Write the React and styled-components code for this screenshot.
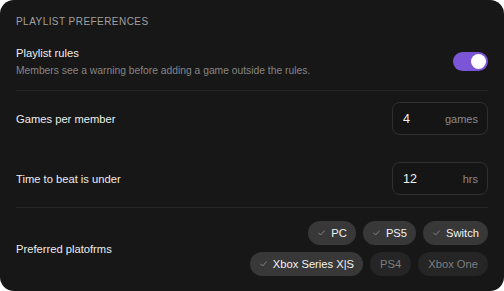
import React, { useState } from 'react';
import styled, { createGlobalStyle } from 'styled-components';

const GlobalStyle = createGlobalStyle`
  html, body {
    margin: 0;
    padding: 0;
    background: #ffffff;
  }
  body {
    font-family: "Liberation Sans", Arial, sans-serif;
  }
`;

const Card = styled.div`
  width: 504px;
  height: 291px;
  box-sizing: border-box;
  background: #171717;
  border-radius: 14px;
  padding: 0 16px;
  display: flex;
  flex-direction: column;
  overflow: hidden;
`;

const Section = styled.div`
  display: flex;
  flex-direction: column;
  gap: ${({ gap }) => gap || 0}px;
  padding: ${({ pad }) => pad};
  border-bottom: ${({ last }) => (last ? 'none' : '1px solid #262626')};
  flex: ${({ last }) => (last ? 1 : 'none')};
`;

const Heading = styled.h2`
  margin: 0;
  font-size: 10px;
  line-height: 12px;
  font-weight: 400;
  letter-spacing: 0.45px;
  text-transform: uppercase;
  color: #a0a0a0;
`;

const Row = styled.div`
  display: flex;
  align-items: center;
  justify-content: space-between;
  gap: 16px;
`;

const Texts = styled.div`
  display: flex;
  flex-direction: column;
  gap: 3px;
`;

const Label = styled.div`
  font-size: 11.2px;
  line-height: 16px;
  color: #ededed;
`;

const Hint = styled.div`
  font-size: 10.3px;
  line-height: 14px;
  color: #858585;
`;

const Switch = styled.button`
  width: 35px;
  height: 19px;
  border: none;
  border-radius: 10px;
  padding: 2px;
  background: ${({ on }) => (on ? '#7a56d6' : '#3a3a3a')};
  display: flex;
  justify-content: ${({ on }) => (on ? 'flex-end' : 'flex-start')};
  align-items: center;
  cursor: pointer;
  box-sizing: border-box;
`;

const Knob = styled.span`
  width: 15px;
  height: 15px;
  border-radius: 50%;
  background: #ffffff;
`;

const Field = styled.label`
  width: 96px;
  height: 33px;
  box-sizing: border-box;
  border: 1px solid #303030;
  border-radius: 8px;
  background: #151515;
  display: flex;
  align-items: center;
  justify-content: space-between;
  padding: 0 9px 0 10px;
`;

const Value = styled.span`
  font-size: 12.5px;
  color: #f2f2f2;
`;

const Unit = styled.span`
  font-size: 11px;
  color: #8a8a8a;
`;

const Chips = styled.div`
  display: flex;
  flex-wrap: wrap;
  justify-content: flex-end;
  gap: 7px;
  width: 250px;
`;

const Chip = styled.button`
  height: 24px;
  border: none;
  border-radius: 12px;
  padding: ${({ selected }) => (selected ? '0 9px 0 10px' : '0 10px')};
  display: flex;
  align-items: center;
  gap: 6px;
  flex-shrink: 0;
  font-family: inherit;
  font-size: 11.2px;
  background: ${({ selected }) => (selected ? '#383838' : '#252525')};
  color: ${({ selected }) => (selected ? '#f2f2f2' : '#7e7e7e')};
  cursor: pointer;
`;

const Check = () => (
  <svg width="7" height="6" viewBox="0 0 7 6" fill="none">
    <path d="M0.6 3 L2.6 5 L6.4 0.8" stroke="#8c8c8c" strokeWidth="0.9" strokeLinecap="round" strokeLinejoin="round" />
  </svg>
);

const platforms = [
  { name: 'PC', selected: true },
  { name: 'PS5', selected: true },
  { name: 'Switch', selected: true },
  { name: 'Xbox Series X|S', selected: true },
  { name: 'PS4', selected: false },
  { name: 'Xbox One', selected: false },
];

export default function App() {
  const [rules, setRules] = useState(true);

  return (
    <>
      <GlobalStyle />
      <Card>
        <Section pad="16px 0 12px" gap={17}>
          <Heading>Playlist preferences</Heading>
          <Row>
            <Texts>
              <Label>Playlist rules</Label>
              <Hint>Members see a warning before adding a game outside the rules.</Hint>
            </Texts>
            <Switch on={rules ? 1 : 0} onClick={() => setRules(!rules)}>
              <Knob />
            </Switch>
          </Row>
        </Section>
        <Section pad="11px 0 12px" gap={27}>
          <Row>
            <Label>Games per member</Label>
            <Field>
              <Value>4</Value>
              <Unit>games</Unit>
            </Field>
          </Row>
          <Row>
            <Label>Time to beat is under</Label>
            <Field>
              <Value>12</Value>
              <Unit>hrs</Unit>
            </Field>
          </Row>
        </Section>
        <Section pad="13px 0 14px" last>
          <Row>
            <Label>Preferred platofrms</Label>
            <Chips>
              {platforms.map((p) => (
                <Chip key={p.name} selected={p.selected ? 1 : 0}>
                  {p.selected && <Check />}
                  {p.name}
                </Chip>
              ))}
            </Chips>
          </Row>
        </Section>
      </Card>
    </>
  );
}
